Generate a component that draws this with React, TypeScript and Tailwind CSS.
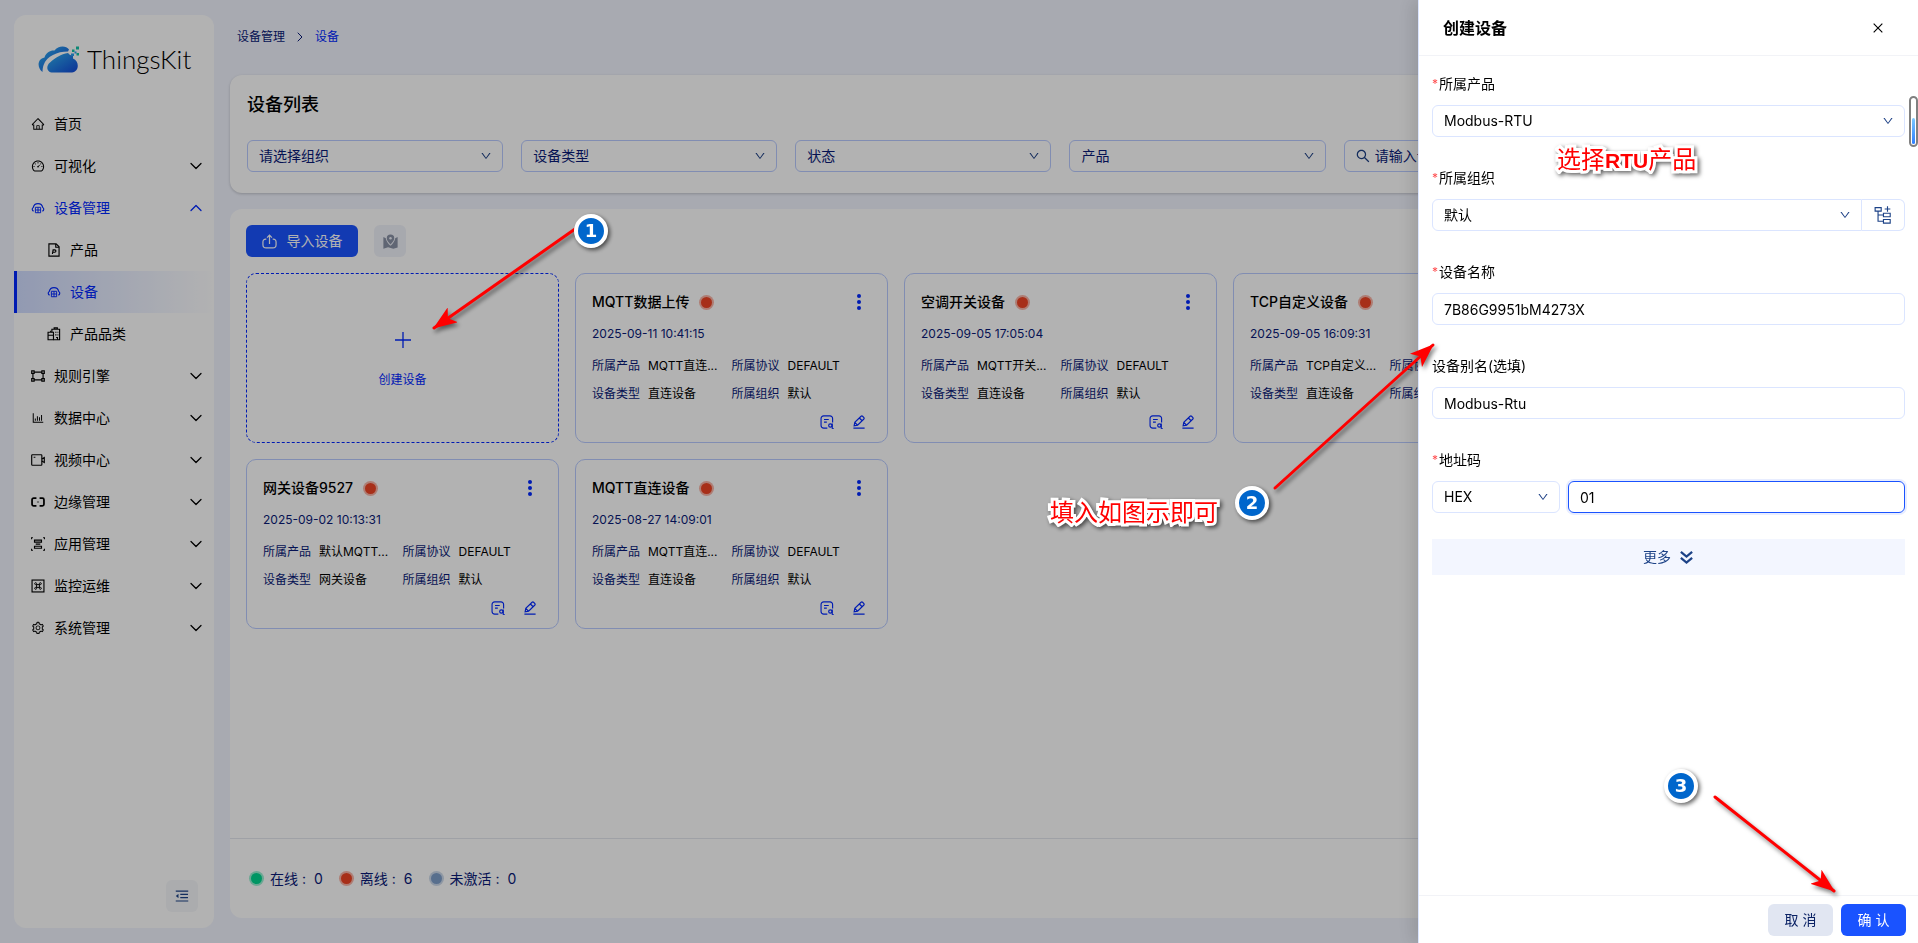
import type { ReactNode } from "react";
import {
  AiOutlineBarChart,
  AiOutlineClose,
  AiOutlineDashboard,
  AiOutlineDown,
  AiOutlineHome,
  AiOutlineMenuFold,
  AiOutlineSearch,
  AiOutlineSetting,
} from "react-icons/ai";
import { ChevronDown, ChevronRight, ChevronUp } from "lucide-react";
import clsx from "clsx";

type IconProps = { className?: string };

function Glyph({ className, children }: IconProps & { children: ReactNode }) {
  return (
    <svg
      viewBox="0 0 16 16"
      fill="none"
      stroke="currentColor"
      strokeWidth="1.3"
      className={clsx("shrink-0", className)}
      aria-hidden="true"
    >
      {children}
    </svg>
  );
}

const DeviceIcon = ({ className }: IconProps) => (
  <Glyph className={className}>
    <path d="M3 11.6a2.3 2.3 0 0 1-.4-4.200 5.500 5.500 0 0 1 10.800 0 2.300 2.300 0 0 1-.4 4.200" />
    <path d="M5 7.200h6v6.200H5zM5 10.300h6M8 7.200v6.200" strokeWidth="1.100" />
  </Glyph>
);

const ProductIcon = ({ className }: IconProps) => (
  <Glyph className={className}>
    <path d="M2.2 1h8.2l3.4 3.4V15H2.2z" />
    <path d="M10 1v3.8h3.8M6.2 12.6l.8-4.8h1.8a1.4 1.4 0 0 1 0 2.8H6.8" />
  </Glyph>
);

const CategoryIcon = ({ className }: IconProps) => (
  <Glyph className={className}>
    <path d="M5.6 6V2.6h8.8v12H7.4M8.2 2.6V1h3.6v1.6" />
    <path d="M1.2 6h6.2v8.6H1.2zM1.2 9.4h6.2M4.2 6V4.4M9.4 6h1.4M12 6h1M9.4 9h1.4M12 9h1M10.4 12h1.6v2.6" />
  </Glyph>
);

const RuleIcon = ({ className }: IconProps) => (
  <Glyph className={className}>
    <path d="M3.4 3.6h9.2M3.4 12.4h9.2M2.2 5v6M13.8 5v6" />
    <path d="M.8 2.2h2.8V5H.8zM12.4 2.2h2.8V5h-2.8zM.8 11h2.8v2.8H.8zM12.4 11h2.8v2.8h-2.8z" />
  </Glyph>
);

const VideoIcon = ({ className }: IconProps) => (
  <Glyph className={className}>
    <rect x="0.8" y="2" width="11.6" height="12" rx="0.8" />
    <path d="M12.4 6.8l2.8-1.6v5.6l-2.8-1.6M3 4.8h2" />
  </Glyph>
);

const EdgeIcon = ({ className }: IconProps) => (
  <Glyph className={className}>
    <path
      d="M6.2 3.6H3A1.8 1.8 0 0 0 1.2 5.4v5.2A1.8 1.8 0 0 0 3 12.4h3.2M9.8 3.6H13a1.8 1.8 0 0 1 1.8 1.8v5.2a1.8 1.8 0 0 1-1.8 1.8H9.8"
      strokeWidth="2"
    />
    <path d="M6.8 8h2.4" strokeWidth="0.8" />
  </Glyph>
);

const AppIcon = ({ className }: IconProps) => (
  <Glyph className={className}>
    <path d="M.4 2.6V.8h1.8M13.8.8h1.8v1.8M.4 13.4v1.8h1.8M13.8 15.2h1.8v-1.8" />
    <path d="M4 3.6h8v2.2H4zM4 10.6h8v2.2H4zM5.4 8.2h5.2" />
  </Glyph>
);

const MonitorIcon = ({ className }: IconProps) => (
  <Glyph className={className}>
    <rect x="1.2" y="1.2" width="13.6" height="13.6" />
    <path
      d="M6.4 6.400h3.200v3.200H6.400zM6.400 6.400H5.200a1.100 1.100 0 1 1 1.200-1.200zM9.600 6.400V5.200a1.100 1.100 0 1 1 1.200 1.200zM6.400 9.600v1.200a1.100 1.100 0 1 1-1.200-1.200zM9.600 9.600h1.200a1.100 1.100 0 1 1-1.200 1.200z"
      strokeWidth="1.100"
    />
  </Glyph>
);

const ImportIcon = ({ className }: IconProps) => (
  <Glyph className={className}>
    <path d="M4.6 5.4H4A3 3 0 0 0 1 8.6v2.8a3.4 3.4 0 0 0 3.4 3.4h7.2a3.4 3.4 0 0 0 3.4-3.4V8.6a3 3 0 0 0-3-3.2h-.6" />
    <path d="M8 10.6V1.4M5.4 3.8L8 1.2l2.6 2.6" />
  </Glyph>
);

const MapPinIcon = ({ className }: IconProps) => (
  <svg viewBox="0 0 16 16" fill="currentColor" className={className} aria-hidden="true">
    <path d="M8 .6a4 4 0 0 0-4 4c0 2.4 2.2 4.8 4 6.6 1.8-1.8 4-4.2 4-6.6a4 4 0 0 0-4-4z" />
    <circle cx="8" cy="4.6" r="1.3" fill="#f0f2fa" />
    <path d="M.4 3.2L3 4.400c.2 2.8 2.6 5.8 5 8.2 2.4-2.4 4.8-5.4 5-8.2l2.6-1.2v11.2L11 15.6l-5.6-1.4L.4 15.6z" />
  </svg>
);

const LogIcon = ({ className }: IconProps) => (
  <Glyph className={className}>
    <path d="M8.4 15H4.2A3 3 0 0 1 1.2 12V4a3 3 0 0 1 3-3h7.2a3 3 0 0 1 3 3v4.6M4.6 5.2h5.4M4.6 8.2h3.2" />
    <circle cx="11.8" cy="12" r="1.9" />
    <path d="M14 9.8v5.4l1.6.2" />
  </Glyph>
);

const EditIcon = ({ className }: IconProps) => (
  <Glyph className={className}>
    <path d="M2.4 12.400l.8-4L10.400 1.400a1.200 1.200 0 0 1 1.700 0l1.500 1.500a1.200 1.200 0 0 1 0 1.700L6.400 11.600zM8.400 3.400l3.200 3.200M3.200 8.400l3.200 3.200M1.600 15h12.800" />
  </Glyph>
);

const TreeAddIcon = ({ className }: IconProps) => (
  <Glyph className={className}>
    <path
      d="M1 1.4h5.4v3.2H1zM8.4 6.4h6v3.2h-6zM8.400 12h6v3.200h-6zM3.600 4.600v9h4.800M3.600 8h4.800M12 .2v5M9.500 2.700h5"
      strokeWidth="1"
    />
  </Glyph>
);

const MoreIcon = ({ className }: IconProps) => (
  <Glyph className={className}>
    <path d="M2 2l6 5 6-5M2 8.500l6 5 6-5" strokeWidth="2.400" />
  </Glyph>
);

const Logo = () => (
  <svg viewBox="0 0 41 27" className="h-[27px] w-[41px]" aria-hidden="true">
    <defs>
      <linearGradient id="cloud" x1="0" y1="0" x2="1" y2="1">
        <stop offset="0" stopColor="#2fb4ef" />
        <stop offset="1" stopColor="#1247d8" />
      </linearGradient>
    </defs>
    <path
      fill="url(#cloud)"
      d="M4.500 26C-1 22 -1 13 6.500 11.500 8 6 13 4 16.500 4.500 20-.5 28-1 31 3.500l-1 2C19 5.500 9 10 5.600 19c-1 3-1 5-1.100 7z"
    />
    <path
      fill="url(#cloud)"
      d="M15 26.500c-7 0-7-7-3-10C17 12 23 8 30 7l2 2 3 .5v3c7 3 6 13.500-1 14z"
    />
    <path fill="#12c3a8" d="M38 .5h3v3h-3zM34 3.500h2.500v2.500H34zM38.500 7H41v2.500h-2.500z" />
    <path fill="#2a9ff0" d="M33 7.500h3V10h-3zM36.500 5.500h2v2h-2z" />
  </svg>
);

const menuItems = [
  { icon: AiOutlineHome, label: "首页", leaf: true },
  { icon: AiOutlineDashboard, label: "可视化" },
  {
    icon: DeviceIcon,
    label: "设备管理",
    open: true,
    children: [
      { icon: ProductIcon, label: "产品" },
      { icon: DeviceIcon, label: "设备", active: true },
      { icon: CategoryIcon, label: "产品品类" },
    ],
  },
  { icon: RuleIcon, label: "规则引擎" },
  { icon: AiOutlineBarChart, label: "数据中心" },
  { icon: VideoIcon, label: "视频中心" },
  { icon: EdgeIcon, label: "边缘管理" },
  { icon: AppIcon, label: "应用管理" },
  { icon: MonitorIcon, label: "监控运维" },
  { icon: AiOutlineSetting, label: "系统管理" },
];

const filters = ["请选择组织", "设备类型", "状态", "产品"];

const devices = [
  { name: "MQTT数据上传", time: "2025-09-11 10:41:15", product: "MQTT直连...", type: "直连设备" },
  { name: "空调开关设备", time: "2025-09-05 17:05:04", product: "MQTT开关...", type: "直连设备" },
  { name: "TCP自定义设备", time: "2025-09-05 16:09:31", product: "TCP自定义...", type: "直连设备" },
  { name: "TCP设备", time: "2025-09-03 11:20:08", product: "TCP自定义...", type: "直连设备" },
  { name: "网关设备9527", time: "2025-09-02 10:13:31", product: "默认MQTT...", type: "网关设备" },
  { name: "MQTT直连设备", time: "2025-08-27 14:09:01", product: "MQTT直连...", type: "直连设备" },
];

const statuses = [
  { label: "在线", count: 0, dot: "bg-[#00d68f] ring-[#00d68f]/40" },
  { label: "离线", count: 6, dot: "bg-[#f04424] ring-[#f04424]/40" },
  { label: "未激活", count: 0, dot: "bg-[#7f9fcb] ring-[#7f9fcb]/40" },
];

const arrows = [
  { from: [575, 229], to: [434, 328] },
  { from: [1275, 488], to: [1433, 345] },
  { from: [1715, 797], to: [1834, 891] },
];

function Sidebar() {
  return (
    <aside className="flex w-[200px] shrink-0 flex-col rounded-xl bg-white">
      <div className="flex items-center gap-2 pt-[26px] pl-6">
        <Logo />
        <span className="font-['Lato'] text-[26px] leading-9 font-light">ThingsKit</span>
      </div>
      <nav className="mt-[26px]">
        {menuItems.map((item) => (
          <div key={item.label}>
            <button
              className={clsx(
                "flex h-[42px] w-full items-center gap-[9px] pr-2 pl-[17px]",
                item.open ? "text-[#0028ff]" : "text-black",
              )}
            >
              <item.icon className="size-[14px]" />
              <span className="flex-1 text-left">{item.label}</span>
              {!item.leaf &&
                (item.open ? (
                  <ChevronUp className="size-5" strokeWidth={1.5} />
                ) : (
                  <ChevronDown className="size-5" strokeWidth={1.5} />
                ))}
            </button>
            {item.children?.map((child) => (
              <a
                key={child.label}
                href="#"
                className={clsx(
                  "flex h-[42px] items-center gap-[9px] border-l-[3px] pl-[30px]",
                  child.active
                    ? "border-[#0028ff] bg-linear-to-r from-[#1a53ff]/20 to-transparent text-[#0028ff]"
                    : "border-transparent text-black",
                )}
              >
                <child.icon className="size-[14px]" />
                {child.label}
              </a>
            ))}
          </div>
        ))}
      </nav>
      <button
        aria-label="收起菜单"
        className="mt-auto mr-4 mb-4 flex size-8 items-center justify-center self-end rounded-md bg-[#f5f7fa] text-[#1c4287]"
      >
        <AiOutlineMenuFold className="size-4" />
      </button>
    </aside>
  );
}

function DeviceCard({ device }: { device: (typeof devices)[number] }) {
  return (
    <article className="flex h-[170px] flex-col rounded-[10px] border border-[#b9cbff] px-4 pt-[18px] pb-[13px] text-xs">
      <div className="flex h-5 items-center justify-between">
        <h3 className="flex items-center gap-3 text-sm font-medium">
          {device.name}
          <span className="size-[11px] rounded-full bg-[#f04424] ring-2 ring-[#f04424]/40" />
        </h3>
        <button aria-label="更多操作" className="flex w-6 flex-col items-center gap-[2px]">
          <i className="size-1 rounded-full bg-[#0028ff]" />
          <i className="size-1 rounded-full bg-[#0028ff]" />
          <i className="size-1 rounded-full bg-[#0028ff]" />
        </button>
      </div>
      <time className="mt-3 leading-5 text-[#0a1a78]">{device.time}</time>
      <dl className="mt-3 grid grid-cols-2 gap-y-2 leading-5">
        <Field label="所属产品" value={device.product} />
        <Field label="所属协议" value="DEFAULT" />
        <Field label="设备类型" value={device.type} />
        <Field label="所属组织" value="默认" />
      </dl>
      <div className="mt-auto flex justify-end gap-[18px] pr-[5px] text-[#0028ff]">
        <button aria-label="日志">
          <LogIcon className="size-[14px]" />
        </button>
        <button aria-label="编辑">
          <EditIcon className="size-[14px]" />
        </button>
      </div>
    </article>
  );
}

function Field({ label, value }: { label: string; value: string }) {
  return (
    <div className="flex gap-2 whitespace-nowrap">
      <dt className="text-[#0a1a78]">{label}</dt>
      <dd>{value}</dd>
    </div>
  );
}

function Select({ id, value, className, filter }: { id: string; value: string; className?: string; filter?: boolean }) {
  return (
    <div className={clsx("relative", className)}>
      <select
        id={id}
        aria-label={filter ? value : undefined}
        className={clsx(
          "h-8 w-full appearance-none rounded-md border bg-white px-[11px]",
          filter ? "border-[#b9cbff] text-[#0a1a78]" : "border-[#dbe5ff] text-black",
        )}
      >
        <option>{value}</option>
      </select>
      <AiOutlineDown className="pointer-events-none absolute top-[10px] right-[11px] size-3 text-[#1c3f85]" />
    </div>
  );
}

function FormItem({ id, label, required, children }: { id: string; label: string; required?: boolean; children: ReactNode }) {
  return (
    <div className="mb-[35px]">
      <label htmlFor={id} className="mb-[15px] flex h-3 items-center">
        {required && <span className="mr-px text-xs text-[#ff4d4f]">*</span>}
        {label}
      </label>
      {children}
    </div>
  );
}

function CreateDrawer() {
  const input = "h-8 w-full rounded-md border border-[#dbe5ff] px-[11px] outline-none";

  return (
    <section
      role="dialog"
      aria-label="创建设备"
      className="fixed inset-y-0 right-0 flex w-[500px] flex-col border-l border-[#dbe5ff] bg-white shadow-[-6px_0_16px_rgba(0,0,0,0.12)]"
    >
      <header className="flex h-14 shrink-0 items-center justify-between border-b border-[#f2f3f7] pr-[33px] pl-6">
        <h2 className="text-base font-bold">创建设备</h2>
        <button aria-label="关闭">
          <AiOutlineClose className="size-[14px]" />
        </button>
      </header>
      <form className="flex-1 overflow-hidden px-[13px] pt-[22px]">
        <FormItem id="product" label="所属产品" required>
          <Select id="product" value="Modbus-RTU" />
        </FormItem>
        <FormItem id="org" label="所属组织" required>
          <div className="flex">
            <Select id="org" value="默认" className="flex-1 [&>select]:rounded-r-none" />
            <button
              type="button"
              aria-label="新增组织"
              className="flex h-8 w-[43px] items-center justify-center rounded-r-md border border-l-0 border-[#dbe5ff] text-[#1c4287]"
            >
              <TreeAddIcon className="size-[18px]" />
            </button>
          </div>
        </FormItem>
        <FormItem id="name" label="设备名称" required>
          <input id="name" defaultValue="7B86G9951bM4273X" className={input} />
        </FormItem>
        <FormItem id="alias" label="设备别名(选填)">
          <input id="alias" defaultValue="Modbus-Rtu" className={input} />
        </FormItem>
        <FormItem id="address" label="地址码" required>
          <div className="flex gap-2">
            <Select id="format" value="HEX" className="w-32" />
            <input
              id="address"
              defaultValue="01"
              className="h-8 min-w-0 flex-1 rounded-md border border-[#1a53ff] px-[11px] ring-2 ring-[#1a53ff]/10 outline-none"
            />
          </div>
        </FormItem>
        <button
          type="button"
          className="-mt-[9px] flex h-9 w-full items-center justify-center gap-2 bg-[#f3f6ff] text-[#1c4287]"
        >
          更多
          <MoreIcon className="size-[15px]" />
        </button>
      </form>
      <footer className="flex h-12 shrink-0 items-center justify-end gap-2 border-t border-[#f2f3f7] pr-3">
        <button className="h-8 w-[65px] rounded-md bg-[#e1e6f2] text-[#0b2265]">取 消</button>
        <button className="h-8 w-[65px] rounded-md bg-[#1a53ff] text-white">确 认</button>
      </footer>
    </section>
  );
}

function Badge({ n, className }: { n: number; className: string }) {
  return (
    <span
      className={clsx(
        "absolute flex size-[34px] items-center justify-center rounded-full border-4 border-white bg-[#0066cc] font-['DejaVu_Sans'] text-lg leading-none font-bold text-white shadow-[2px_2px_4px_rgba(0,0,0,0.6)]",
        className,
      )}
    >
      {n}
    </span>
  );
}

function Note({ className, children }: { className: string; children: ReactNode }) {
  return (
    <span
      className={clsx(
        "absolute text-2xl whitespace-nowrap text-[#ff0000] drop-shadow-[2px_2px_2px_rgba(0,0,0,0.6)] [-webkit-text-stroke:6px_white] [paint-order:stroke_fill]",
        className,
      )}
    >
      {children}
    </span>
  );
}

function Annotations() {
  return (
    <div className="pointer-events-none fixed inset-0">
      <svg className="absolute inset-0 size-full drop-shadow-[2px_3px_2px_rgba(0,0,0,0.5)]" aria-hidden="true">
        <defs>
          <marker
            id="head"
            viewBox="0 0 24 18"
            refX="23"
            refY="9"
            markerWidth="24"
            markerHeight="18"
            markerUnits="userSpaceOnUse"
            orient="auto"
          >
            <path d="M24 9L0 0l6 9-6 9z" fill="#ff0000" />
          </marker>
        </defs>
        {arrows.map(({ from, to }) => (
          <line
            key={from[0]}
            x1={from[0]}
            y1={from[1]}
            x2={to[0]}
            y2={to[1]}
            stroke="#ff0000"
            strokeWidth="3"
            strokeLinecap="round"
            markerEnd="url(#head)"
          />
        ))}
      </svg>
      <Badge n={1} className="top-[214px] left-[574px]" />
      <Badge n={2} className="top-[486px] left-[1235px]" />
      <Badge n={3} className="top-[769px] left-[1664px]" />
      <Note className="top-[144px] left-[1557px]">
        选择<b className="font-['Liberation_Sans'] text-[21px]">RTU</b>产品
      </Note>
      <Note className="top-[497px] left-[1050px]">填入如图示即可</Note>
      <div className="absolute top-[96px] right-0 flex h-[51px] w-[9px] items-end rounded-full border-2 border-[#808080] bg-white p-px">
        <div className="h-[26px] w-full rounded-full bg-linear-to-b from-[#7cc8ff] to-[#2f7dff]" />
      </div>
    </div>
  );
}

export default function App() {
  return (
    <div className="relative flex h-screen min-h-[900px] gap-4 overflow-hidden bg-[#f1f4fe] py-[15px] pr-[27px] pl-[14px] font-['Inter','Noto_Sans_CJK_SC',sans-serif] text-sm text-black">
      <Sidebar />

      <main className="flex min-w-0 flex-1 flex-col pb-[10px]">
        {/* Breadcrumb */}
        <div className="flex h-11 shrink-0 items-center gap-[7px] pl-[7px] text-xs text-[#0a1a78]">
          <a href="#">设备管理</a>
          <ChevronRight className="size-4" strokeWidth={1.5} />
          <a href="#" className="text-[#0028ff]">
            设备
          </a>
        </div>

        {/* Filters */}
        <section className="mt-4 rounded-xl bg-white px-[17px] pt-[18px] pb-[21px] shadow-[0_1px_3px_rgba(0,0,0,0.2)]">
          <h1 className="mb-[23px] text-lg leading-6 font-medium">设备列表</h1>
          <div className="grid grid-cols-6 gap-[18px]">
            {filters.map((label) => (
              <Select key={label} id={label} value={label} filter />
            ))}
            <div className="col-span-2 flex h-8 items-center gap-1 rounded-md border border-[#b9cbff] px-[10px] text-[#1c3f85]">
              <AiOutlineSearch className="size-4" />
              <input
                aria-label="设备名称"
                placeholder="请输入设备名称"
                className="min-w-0 flex-1 outline-none placeholder:text-[#0a1a78]"
              />
            </div>
          </div>
        </section>

        {/* Device list */}
        <section className="mt-4 flex flex-1 flex-col rounded-xl bg-white">
          <div className="flex gap-4 px-4 pt-4">
            <button className="flex h-8 w-28 items-center justify-center gap-[10px] rounded-md bg-[#1a53ff] text-white">
              <ImportIcon className="size-[15px]" />
              导入设备
            </button>
            <button
              aria-label="地图模式"
              className="flex size-8 items-center justify-center rounded-md bg-[#f0f2fa] text-[#8a93a6]"
            >
              <MapPinIcon className="size-[15px]" />
            </button>
          </div>
          <div className="grid grid-cols-5 gap-4 p-4">
            <button className="flex h-[170px] flex-col items-center justify-center gap-6 rounded-[10px] border border-dashed border-[#0028ff] pt-1 text-xs text-[#0028ff]">
              <Glyph className="size-4">
                <path d="M8 0v16M0 8h16" />
              </Glyph>
              创建设备
            </button>
            {devices.map((device) => (
              <DeviceCard key={device.name} device={device} />
            ))}
          </div>
          <div className="mt-auto flex h-20 items-center gap-[18px] border-t border-[#e4e7ee] px-[21px] text-[#0a1a78]">
            {statuses.map((s) => (
              <span key={s.label} className="flex items-center gap-2">
                <i className={clsx("size-[11px] rounded-full ring-2", s.dot)} />
                {s.label} : <span>{s.count}</span>
              </span>
            ))}
          </div>
        </section>
      </main>

      <div className="fixed inset-0 bg-black/30" />
      <CreateDrawer />
      <Annotations />
    </div>
  );
}
